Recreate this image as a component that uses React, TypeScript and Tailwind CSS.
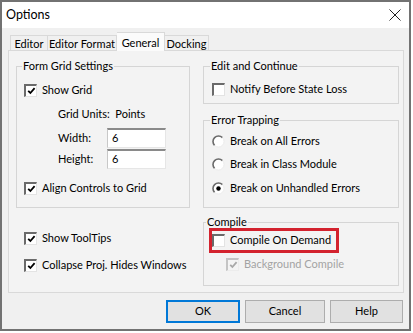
import React from 'react';

function Check({ checked = false, disabled = false }: { checked?: boolean; disabled?: boolean }) {
  return (
    <span
      className={
        disabled
          ? 'w-[13px] h-[13px] shrink-0 flex items-center justify-center bg-[#f4f4f4] border-t-2 border-l-2 border-r border-b border-t-[#c4c4c4] border-l-[#c4c4c4] border-r-[#ececec] border-b-[#ececec]'
          : 'w-[13px] h-[13px] shrink-0 flex items-center justify-center bg-white border-t-2 border-l-2 border-r border-b border-t-[#6a6a6a] border-l-[#6a6a6a] border-r-[#e3e3e3] border-b-[#e3e3e3]'
      }
    >
      {checked && (
        <svg width="9" height="8" viewBox="0 0 9 8">
          <path d="M1.2 3.8 L3.4 6 L7.6 1.2" fill="none" stroke={disabled ? '#a8a8a8' : '#000'} strokeWidth={1.8} />
        </svg>
      )}
    </span>
  );
}

function Radio({ checked = false }: { checked?: boolean }) {
  return (
    <svg width="13" height="13" viewBox="0 0 13 13" className="shrink-0">
      <circle cx="6.5" cy="6.5" r="5.5" fill="#fff" />
      <path d="M2.6 10.4 A5.5 5.5 0 0 1 10.4 2.6" fill="none" stroke="#6a6a6a" strokeWidth={1.6} />
      <path d="M10.4 2.6 A5.5 5.5 0 0 1 2.6 10.4" fill="none" stroke="#ececec" strokeWidth={1} />
      {checked && <circle cx="6.5" cy="6.5" r="2.2" fill="#000" />}
    </svg>
  );
}

function Row({ children, className = '' }: { children: React.ReactNode; className?: string }) {
  return <div className={`flex items-center h-[16px] gap-[4px] whitespace-nowrap ${className}`}>{children}</div>;
}

function Group({ title, className, children }: { title: string; className: string; children: React.ReactNode }) {
  return (
    <fieldset className={`border border-[#d5d5d5] ${className}`}>
      <legend className="text-[11px] leading-[16px] px-[1px] -ml-[2px]">{title}</legend>
      {children}
    </fieldset>
  );
}

export default function App() {
  return (
    <div className="w-[413px] h-[333px] bg-white font-['Lato',sans-serif] text-[11px] text-black">
      <div className="w-[411px] h-[331px] border-2 border-[#727272] flex flex-col bg-[#f0f0f0]">
        {/* Title bar */}
        <div className="h-[26px] bg-white flex items-center justify-between pl-[4px] pr-[8px]">
          <span className="text-[12.5px]">Options</span>
          <svg width="12" height="12" viewBox="0 0 12 12">
            <path d="M0.5 0.5 L11.5 11.5 M11.5 0.5 L0.5 11.5" stroke="#222" strokeWidth={1} />
          </svg>
        </div>

        <div className="px-[6px] pt-[4px]">
          {/* Tabs */}
          <div className="flex items-start h-[18px] pl-[2px] relative z-10">
            <div className="mt-[3px] w-[38px] h-[15px] flex items-center justify-center border border-b-0 border-[#d9d9d9] leading-none">Editor</div>
            <div className="mt-[3px] w-[69px] h-[15px] flex items-center justify-center border border-b-0 border-l-0 border-[#d9d9d9] leading-none">Editor Format</div>
            <div className="w-[48px] h-[19px] flex items-center justify-center bg-[#fbfbfb] border border-b-0 border-l-0 border-[#d9d9d9] leading-none">General</div>
            <div className="mt-[3px] w-[44px] h-[15px] flex items-center justify-center border border-b-0 border-l-0 border-[#d9d9d9] leading-none">Docking</div>
          </div>

          {/* Tab panel */}
          <div className="w-[396px] h-[243px] border border-[#d9d9d9] bg-[#f3f3f3] flex gap-[13px] pl-[7px]">
            {/* Left column */}
            <div className="w-[174px] flex flex-col">
              <Group title="Form Grid Settings" className="mt-[7px] h-[150px] px-[7px]">
                <Row className="mt-[8px]">
                  <Check checked />
                  <span className="ml-[1px]">Show Grid</span>
                </Row>
                <Row className="mt-[8px] pl-[34px]">
                  <span>Grid Units:&nbsp; Points</span>
                </Row>
                <div className="mt-[6px] h-[20px] flex items-center pl-[34px]">
                  <span className="w-[49px]">Width:</span>
                  <div className="w-[59px] h-[20px] bg-white border-t-2 border-l border-r border-b border-t-[#8a8a8a] border-l-[#c8c8c8] border-r-[#e6e6e6] border-b-[#e6e6e6] pl-[4px] leading-[16px]">6</div>
                </div>
                <div className="mt-[1px] h-[20px] flex items-center pl-[34px]">
                  <span className="w-[49px]">Height:</span>
                  <div className="w-[59px] h-[20px] bg-white border-t-2 border-l border-r border-b border-t-[#8a8a8a] border-l-[#c8c8c8] border-r-[#e6e6e6] border-b-[#e6e6e6] pl-[4px] leading-[16px]">6</div>
                </div>
                <Row className="mt-[11px]">
                  <Check checked />
                  <span className="ml-[1px]">Align Controls to Grid</span>
                </Row>
              </Group>

              <Row className="mt-[22px] pl-[8px]">
                <Check checked />
                <span className="ml-[1px]">Show ToolTips</span>
              </Row>
              <Row className="mt-[11px] pl-[8px]">
                <Check checked />
                <span className="ml-[1px]">Collapse Proj. Hides Windows</span>
              </Row>
            </div>

            {/* Right column */}
            <div className="w-[196px] flex flex-col">
              <Group title="Edit and Continue" className="mt-[7px] h-[46px] px-[8px]">
                <Row className="mt-[7px]">
                  <Check />
                  <span className="ml-[1px]">Notify Before State Loss</span>
                </Row>
              </Group>

              <Group title="Error Trapping" className="mt-[8px] h-[96px] px-[8px]">
                <Row className="mt-[5px]">
                  <Radio />
                  <span className="ml-[1px]">Break on All Errors</span>
                </Row>
                <Row className="mt-[7px]">
                  <Radio />
                  <span className="ml-[1px]">Break in Class Module</span>
                </Row>
                <Row className="mt-[8px]">
                  <Radio checked />
                  <span className="ml-[1px]">Break on Unhandled Errors</span>
                </Row>
              </Group>

              <Group title="Compile" className="mt-[6px] h-[72px] px-[4px]">
                <div className="-mt-[2px] ml-[1px] w-[130px] h-[25px] border-[3px] border-[#d3222e] flex items-center gap-[4px] whitespace-nowrap">
                  <Check />
                  <span className="ml-[1px]">Compile On Demand</span>
                </div>
                <Row className="mt-[3px] pl-[18px]">
                  <Check checked disabled />
                  <span className="ml-[1px] text-[#a3a3a3]">Background Compile</span>
                </Row>
              </Group>
            </div>
          </div>

          {/* Buttons */}
          <div className="mt-[7px] flex justify-end gap-[5px]">
            <button className="w-[74px] h-[23px] bg-[#e1e1e1] border-2 border-[#0078d7]">OK</button>
            <button className="w-[80px] h-[23px] bg-[#e1e1e1] border border-[#adadad]">Cancel</button>
            <button className="w-[73px] h-[23px] bg-[#e1e1e1] border border-[#adadad]">Help</button>
          </div>
        </div>
      </div>
    </div>
  );
}
